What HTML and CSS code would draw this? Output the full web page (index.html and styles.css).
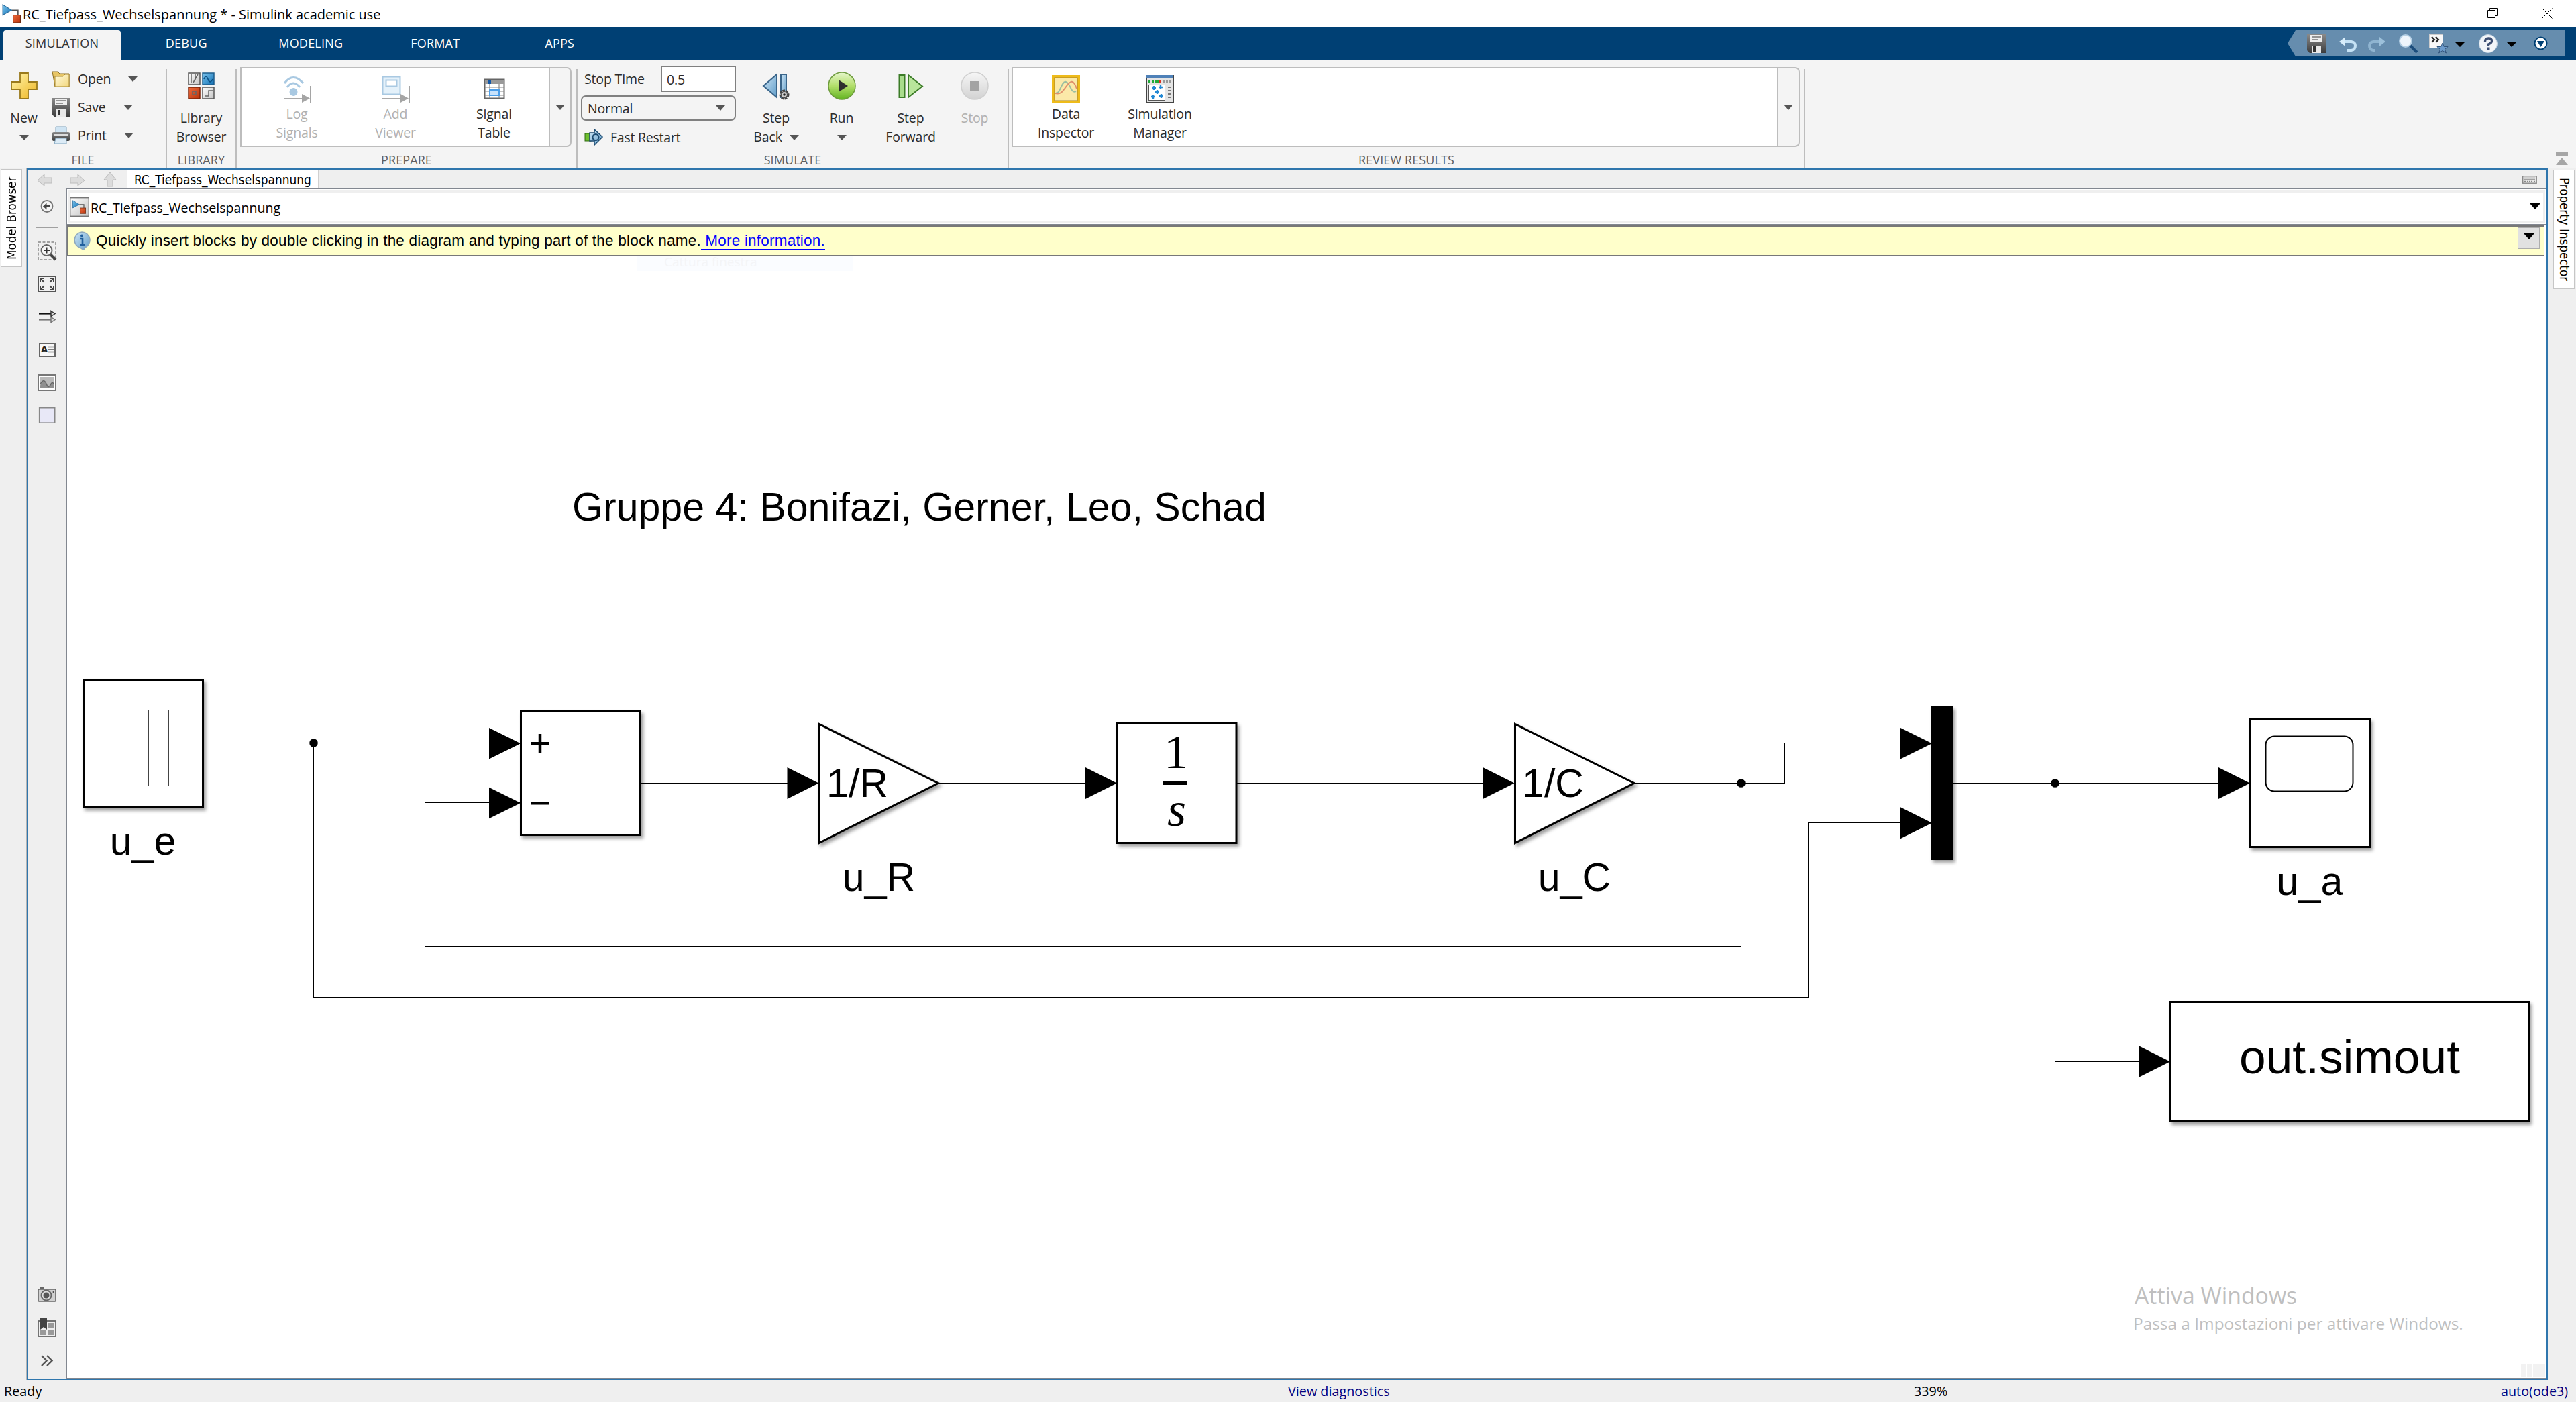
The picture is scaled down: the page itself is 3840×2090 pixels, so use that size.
FILE: index.html
```html
<!DOCTYPE html>
<html lang="en">
<head>
<meta charset="utf-8">
<title>RC_Tiefpass_Wechselspannung * - Simulink academic use</title>
<link rel="stylesheet" href="styles.css">
</head>
<body>
<svg width="0" height="0" class="defs">
  <defs>
    <linearGradient id="gGold" x1="0" y1="0" x2="1" y2="1"><stop offset="0" stop-color="#fff6b0"/><stop offset="1" stop-color="#eeb41e"/></linearGradient>
    <linearGradient id="gFolder" x1="0" y1="0" x2="1" y2="1"><stop offset="0" stop-color="#fffbe0"/><stop offset="1" stop-color="#f3d77c"/></linearGradient>
    <linearGradient id="gBlue" x1="0" y1="0" x2="1" y2="1"><stop offset="0" stop-color="#7cc4ec"/><stop offset="1" stop-color="#1271b5"/></linearGradient>
    <linearGradient id="gRed" x1="0" y1="0" x2="1" y2="1"><stop offset="0" stop-color="#ee6a3c"/><stop offset="1" stop-color="#b8340c"/></linearGradient>
    <linearGradient id="gGray" x1="0" y1="0" x2="1" y2="1"><stop offset="0" stop-color="#ffffff"/><stop offset="1" stop-color="#c4c4c4"/></linearGradient>
    <linearGradient id="gDark" x1="0" y1="0" x2="0" y2="1"><stop offset="0" stop-color="#8a8a8a"/><stop offset="1" stop-color="#3c3c3c"/></linearGradient>
    <linearGradient id="gSky" x1="0" y1="0" x2="1" y2="1"><stop offset="0" stop-color="#cfe6f6"/><stop offset="1" stop-color="#5f9cc8"/></linearGradient>
    <linearGradient id="gGreen" x1="0" y1="0" x2="0" y2="1"><stop offset="0" stop-color="#e6f6cc"/><stop offset=".5" stop-color="#b2de6a"/><stop offset="1" stop-color="#62b421"/></linearGradient>
    <linearGradient id="gLight" x1="0" y1="0" x2="0" y2="1"><stop offset="0" stop-color="#f6f6f6"/><stop offset="1" stop-color="#d2d2d2"/></linearGradient>
    <symbol id="simulink" viewBox="0 0 28 28">
      <path d="M15 9h9v8" fill="none" stroke="#555" stroke-width="1.6"/>
      <path d="M2 1l13 8L2 16z" fill="url(#gBlue)" stroke="#2b6c9c"/>
      <rect x="17" y="16" width="10.5" height="11" fill="url(#gRed)" stroke="#6d2a10"/>
    </symbol>
    <symbol id="floppy" viewBox="0 0 28 28">
      <path d="M0 0h28v28H4l-4-4z" fill="url(#gDark)"/>
      <rect x="5" y="1" width="18" height="10" fill="#eee"/><path d="M7 4h14M7 8h10" stroke="#777" stroke-width="1.5"/>
      <path d="M7 17h14v11H7z" fill="#e8e8e8"/><path d="M9 18h4v8H9z" fill="#333"/>
    </symbol>
  </defs>
</svg>
<div class="window">
  <header class="titlebar">
    <svg class="app-icon" width="29" height="29"><use href="#simulink" width="29" height="29"/></svg>
    <span class="title">RC_Tiefpass_Wechselspannung * - Simulink academic use</span>
    <svg class="caption-buttons" width="178" height="16" viewBox="0 0 178 16" fill="none" stroke="#000">
      <path d="M0 7.5h15M81.500 3.500h11v11h-11zM84.500 3.500v-3h11v11h-3M162.500.5l15 15M177.500.5l-15 15"/>
    </svg>
  </header>

  <nav class="tabs">
    <span class="tab active">SIMULATION</span><span class="tab">DEBUG</span><span class="tab">MODELING</span><span class="tab">FORMAT</span><span class="tab">APPS</span>
    <svg class="quick-access" width="413" height="39" viewBox="3410 45 413 39">
      <path d="M3422 45h401v39h-401l-12-19.500z" fill="#668dae"/>
      <use href="#floppy" x="3439" y="51" width="28" height="28"/>
      <path d="M3494 62h11q6 1 6 6 0 6-6 7h-7" fill="none" stroke="#c5e2f5" stroke-width="4"/><path d="M3487 62l9-7v14z" fill="#d8edfa"/>
      <path d="M3549 62h-11q-6 1-6 6 0 6 6 7h3" fill="none" stroke="#8fb4d0" stroke-width="4"/><path d="M3556 62l-9-7v14z" fill="#9cc0da"/>
      <path d="M3592 67l11 11" stroke="#1c4d7c" stroke-width="4"/><circle cx="3586" cy="61" r="9" fill="#eef5fb" stroke="#b4cfe4" stroke-width="2"/>
      <rect x="3621.500" y="51.500" width="20" height="20" fill="#f8f8f8" stroke="#ccc"/><path d="M3625 55l4 4-4 4M3631 55l4 4-4 4" fill="none" stroke="#222" stroke-width="2.200"/>
      <path d="M3641 64l2.200 5.500h6l-4.700 4 2 5.500-5.500-3.500-5.500 3.500 2-5.500-4.700-4h6z" fill="#6d9ccc" stroke="#33557c"/>
      <path d="M3660 63h14l-7 7zM3737 63h14l-7 7z" fill="#000"/>
      <circle cx="3709" cy="65" r="13.500" fill="#f2f5f8" stroke="#c3d3e2"/><path d="M3704.500 62q0-5 5-5t5 4q0 3-5 5v3" fill="none" stroke="#3d4f73" stroke-width="3.400"/><rect x="3707.500" y="70.500" width="4" height="3.500" fill="#3d4f73"/>
      <circle cx="3787.500" cy="64.500" r="9" fill="#fff" stroke="#004074" stroke-width="2"/><path d="M3782 61h11l-5.500 9z" fill="#004074"/>
    </svg>
  </nav>

  <section class="ribbon">
    <div class="group g-file">
      <div class="group-body">
        <div class="big new">
          <svg width="42" height="42" viewBox="0 0 42 42"><path d="M15 2h12v13h13v11H27v14H15V26H2V15h13z" fill="url(#gGold)" stroke="#9a7a1c" stroke-width="1.800"/></svg>
          <span class="lbl">New</span><i class="arrow"></i>
        </div>
        <div class="rows">
          <div class="row"><svg width="28" height="24" viewBox="0 0 28 24"><path d="M1 1h8l3 3h14v19H5z" fill="#e7c565" stroke="#8c6f22"/><path d="M5 8h12l3-3h6v18H5z" fill="url(#gFolder)" stroke="#a9882f"/></svg><span>Open</span><i class="arrow"></i></div>
          <div class="row"><svg width="28" height="28"><use href="#floppy" width="28" height="28"/></svg><span>Save</span><i class="arrow"></i></div>
          <div class="row"><svg width="28" height="28" viewBox="0 0 28 28"><path d="M6 1h16v10H6z" fill="#cfe4f3" stroke="#7fa3bd"/><rect x="1" y="9" width="26" height="13" rx="2" fill="url(#gDark)"/><path d="M3 13h22" stroke="#ddd" stroke-width="2"/><path d="M6 18h16v8H4z" fill="#dcebf6" stroke="#7fa3bd"/></svg><span>Print</span><i class="arrow"></i></div>
        </div>
      </div>
      <div class="group-name">FILE</div>
    </div>
    <div class="sep"></div>
    <div class="group g-library">
      <div class="group-body">
        <div class="big wide">
          <svg width="42" height="42" viewBox="0 0 42 42"><g stroke="#555" stroke-width="1.500"><rect x="2" y="2" width="17" height="17" fill="url(#gGray)"/><rect x="23" y="2" width="17" height="17" fill="url(#gBlue)" stroke="#1d5d8c"/><rect x="2" y="23" width="17" height="17" fill="url(#gRed)" stroke="#7c2408"/><rect x="23" y="23" width="17" height="17" fill="url(#gGray)"/></g><path d="M6 3v14M9 16l7-12M12 3v9M26 36h6v-8h6M8 29h5v5H8z" fill="none" stroke="#666" stroke-width="1.500"/><path d="M25 11q3-8 6 0t7 0" fill="none" stroke="#0a4f82" stroke-width="1.600"/></svg>
          <span class="lbl">Library<br>Browser</span>
        </div>
      </div>
      <div class="group-name">LIBRARY</div>
    </div>
    <div class="sep"></div>
    <div class="group g-prepare">
      <div class="group-body">
        <div class="gallery">
          <div class="gallery-items">
            <div class="big off"><svg width="42" height="42" viewBox="0 0 42 42"><g fill="none" stroke="#a9c9e2" stroke-width="3"><path d="M2 12q13-17 28 0M6 18q9-12 19 0"/></g><circle cx="15.500" cy="25" r="6" fill="#a9c9e2"/><path d="M1 35h28" stroke="#aaa" stroke-width="2"/><path d="M28 28l12 6.500L28 41z" fill="#a5a5a5"/><path d="M41 16v25" stroke="#a5a5a5" stroke-width="2"/></svg><span class="lbl">Log<br>Signals</span></div>
            <div class="big off"><svg width="42" height="42" viewBox="0 0 42 42"><rect x="1.500" y="2.500" width="26" height="26" fill="#e4f1fa" stroke="#a9c9e2" stroke-width="2"/><rect x="6.500" y="7.500" width="16" height="9" fill="#fff" stroke="#a9c9e2" stroke-width="2"/><path d="M1 35h28" stroke="#aaa" stroke-width="2"/><path d="M28 28l12 6.500L28 41z" fill="#a5a5a5"/><path d="M41 16v25" stroke="#a5a5a5" stroke-width="2"/></svg><span class="lbl">Add<br>Viewer</span></div>
            <div class="big"><svg width="42" height="42" viewBox="0 0 42 42"><rect x="6.500" y="6.500" width="29" height="28" fill="#fff" stroke="#666" stroke-width="2"/><path d="M7 7h28v6H7z" fill="#999"/><rect x="11" y="8" width="5" height="5" fill="#1258a8"/><path d="M7 18h28M7 24h28M7 30h28M14 13v21M28 13v21" stroke="#888" stroke-width="1.200"/><rect x="14" y="22" width="14" height="8" fill="#c8e2fb" stroke="#4c9ee8" stroke-width="2"/></svg><span class="lbl">Signal<br>Table</span></div>
          </div>
          <div class="gallery-more"><i class="arrow"></i></div>
        </div>
      </div>
      <div class="group-name">PREPARE</div>
    </div>
    <div class="sep"></div>
    <div class="group g-simulate">
      <div class="group-body">
        <div class="sim-form">
          <div class="stop-time"><span>Stop Time</span><span class="field">0.5</span></div>
          <div class="combo"><span>Normal</span><i class="arrow"></i></div>
          <div class="fast"><svg width="29" height="24" viewBox="0 0 29 24"><rect x="1" y="6" width="9" height="11" fill="#6fbf2f" stroke="#2f6a10"/><path d="M8 5h7V0l12 11-12 12v-6H8z" fill="url(#gSky)" stroke="#1c4a70" stroke-width="1.500"/><circle cx="17" cy="11.500" r="4.500" fill="none" stroke="#1c4a70" stroke-width="2"/></svg><span>Fast Restart</span></div>
        </div>
        <div class="big w98"><svg width="42" height="42" viewBox="0 0 42 42"><path d="M22 4v34L2 21z" fill="url(#gSky)" stroke="#3a658a" stroke-width="2"/><rect x="28" y="4" width="8" height="34" fill="url(#gSky)" stroke="#3a658a" stroke-width="2"/><circle cx="33" cy="34" r="6" fill="#bbb" stroke="#444" stroke-width="3" stroke-dasharray="3.500 1.500"/><circle cx="33" cy="34" r="4.500" fill="#ccc" stroke="#444"/><circle cx="33" cy="34" r="1.800" fill="#222"/></svg><span class="lbl">Step<br>Back <i class="arrow inline"></i></span></div>
        <div class="big w97"><svg width="42" height="42" viewBox="0 0 42 42"><circle cx="21" cy="21" r="20" fill="url(#gGreen)" stroke="#6c9a3c" stroke-width="1.500"/><path d="M16 12l14 9-14 9z" fill="#2e2e2e"/></svg><span class="lbl">Run</span><i class="arrow"></i></div>
        <div class="big w108"><svg width="42" height="42" viewBox="0 0 42 42"><rect x="3.500" y="5" width="8" height="33" fill="#a9dc8c" stroke="#3c7c28" stroke-width="2"/><path d="M17 5v33l21-16.500z" fill="#b9e59b" stroke="#3c7c28" stroke-width="2"/></svg><span class="lbl">Step<br>Forward</span></div>
        <div class="big w82 off"><svg width="42" height="42" viewBox="0 0 42 42"><circle cx="21" cy="21" r="20" fill="url(#gLight)" stroke="#cfcfcf" stroke-width="1.500"/><rect x="14" y="14" width="14" height="14" fill="#a3a3a3"/></svg><span class="lbl">Stop</span></div>
      </div>
      <div class="group-name">SIMULATE</div>
    </div>
    <div class="sep"></div>
    <div class="group g-review">
      <div class="group-body">
        <div class="gallery">
          <div class="gallery-items">
            <div class="big"><svg width="42" height="42" viewBox="0 0 42 42"><rect x="2" y="2" width="38" height="38" fill="#fbe9a8" stroke="#eebb1a" stroke-width="4"/><rect x="4" y="4" width="34" height="34" fill="none" stroke="#a8842a"/><path d="M6 26C12 30 14 8 21 10S28 28 36 24" fill="none" stroke="#9cbfa0" stroke-width="2"/><path d="M5 27C14 29 16 24 22 16S32 6 37 20" fill="none" stroke="#e0906c" stroke-width="2"/></svg><span class="lbl">Data<br>Inspector</span></div>
            <div class="big"><svg width="42" height="42" viewBox="0 0 42 42"><rect x="1" y="1" width="40" height="40" fill="#e4e4e4" stroke="#444" stroke-width="2"/><path d="M1 0h40v5H1z" fill="#4f81b8"/><path d="M4 9h11" stroke="#1faa38" stroke-width="4" stroke-dasharray="3 2"/><path d="M15 9h4" stroke="#1faa38" stroke-width="4"/><path d="M20 9h3" stroke="#e03020" stroke-width="4"/><path d="M25 9h14" stroke="#999" stroke-width="4" stroke-dasharray="3 2"/><rect x="4.500" y="14.500" width="24" height="23" fill="#fff" stroke="#555"/><path d="M9 19h6M12 16v6M19 18h6M22 15v6M14 25h6M17 22v6M8 32h6M11 29v6M20 31h6M23 28v6" stroke="#2389d4" stroke-width="2.400"/><path d="M33 18h5M33 23h5M33 28h5M33 33h5" stroke="#777" stroke-width="2"/></svg><span class="lbl">Simulation<br>Manager</span></div>
          </div>
          <div class="gallery-more"><i class="arrow"></i></div>
        </div>
      </div>
      <div class="group-name">REVIEW RESULTS</div>
    </div>
    <div class="sep"></div>
    <svg class="collapse" width="18" height="19" viewBox="0 0 18 19"><path d="M0 0h18v5H0zM9 8l9 11H0z" fill="#a6a6a6"/></svg>
  </section>

  <main class="workspace">
    <aside class="rail left"><div class="rail-tab"><span>Model Browser</span></div></aside>
    <div class="editor">
      <div class="doc-tabs">
        <svg width="126" height="27" viewBox="53 253 126 27" fill="#dcdcdc" stroke="#bcbcbc"><path d="M56 269l10-9v5h11v8H66v4zM126 269l-10-9v5h-11v8h11v4zM164 257l9 11h-5v10h-8v-10h-5z"/></svg>
        <span class="doc-tab">RC_Tiefpass_Wechselspannung</span>
        <svg class="keyboard" width="22" height="12" viewBox="0 0 22 12"><rect x=".7" y=".7" width="20.500" height="10.500" fill="#e8e8e8" stroke="#888" stroke-width="1.400"/><path d="M3 3.500h16M3 6h16M3 8.500h2M7 8.500h8M17 8.500h2" stroke="#888" stroke-width="1.300" stroke-dasharray="2 1"/></svg>
      </div>
      <div class="editor-body">
        <svg class="palette" width="57" height="1774" viewBox="42 281 57 1774">
          <circle cx="70" cy="307.500" r="8.500" fill="#f4f4f4" stroke="#777" stroke-width="1.800"/><path d="M64 307.500l5.500-5v3.500h5v3h-5v3.500z" fill="#444"/>
          <path d="M53 339.500h34" stroke="#a0a0a0"/>
          <rect x="57" y="361" width="26" height="26" fill="none" stroke="#888" stroke-width="1.500" stroke-dasharray="4 2.500"/><path d="M75 379l8 8" stroke="#444" stroke-width="4"/><circle cx="69.500" cy="373" r="8" fill="#f6f6f6" stroke="#666" stroke-width="2"/><path d="M65 373h9M69.500 368.500v9" stroke="#333" stroke-width="2"/>
          <rect x="57" y="412" width="26" height="23" fill="#f0f0f0" stroke="#555" stroke-width="2"/><path d="M60 421v-6h6M60.500 415.500l5 5M80 421v-6h-6M79.500 415.500l-5 5M60 426v6h6M60.500 431.500l5-5M80 426v6h-6M79.500 431.500l-5-5" fill="none" stroke="#444" stroke-width="2"/>
          <path d="M58 467.500h20" stroke="#111" stroke-width="2.200"/><path d="M58 476.500h20" stroke="#777" stroke-width="2.200"/><path d="M76 463.500l6 4-6 4z" fill="#ddd" stroke="#333" stroke-width="1.500"/><path d="M76 472.500l6 4-6 4z" fill="#ddd" stroke="#777" stroke-width="1.500"/>
          <rect x="59" y="512" width="23" height="19" fill="#f8f8f8" stroke="#666" stroke-width="2"/><text x="61" y="525" class="glyph-a">A</text><path d="M72 517.500h8M72 521h8M72 524.500h8" stroke="#555" stroke-width="1.500"/>
          <rect x="57" y="559" width="26" height="23" fill="#fff" stroke="#777" stroke-width="2"/><rect x="60" y="562" width="20" height="17" fill="#b9b9b9"/><path d="M60 575q5-11 9-2 3 7 6 1t5-2v7H60z" fill="#8f8f8f"/><path d="M60 573q5-10 9-1 3 8 6 2t5-2" fill="none" stroke="#666" stroke-width="1.500"/>
          <rect x="58.700" y="607.700" width="23" height="22.500" fill="#e8e8f7" stroke="#888" stroke-width="1.600"/>
          <rect x="60" y="1919" width="6" height="4" fill="#666"/><rect x="57" y="1922" width="26" height="18" rx="1" fill="#d0d0d0" stroke="#666" stroke-width="1.600"/><circle cx="69" cy="1931" r="7.500" fill="#ddd" stroke="#666" stroke-width="2"/><circle cx="69" cy="1931" r="4.500" fill="#555"/><circle cx="79.500" cy="1926" r="1" fill="#444"/>
          <rect x="57" y="1969" width="26" height="23" fill="#eee" stroke="#666" stroke-width="1.800"/><path d="M72 1972h9v7h-9zM60 1983h9v7h-9zM72 1983h9v7h-9z" fill="#999"/><path d="M60 1965h10v17l-5-4-5 4z" fill="#444"/>
          <path d="M62 2021l7.500 7.500-7.500 7.500M70 2021l7.500 7.500-7.500 7.500" fill="none" stroke="#555" stroke-width="2.400"/>
        </svg>
        <div class="content">
          <div class="breadcrumb"><div class="crumb-inner">
            <svg width="29" height="29" viewBox="0 0 29 29"><rect x=".7" y=".7" width="27.600" height="27.600" fill="url(#gGray)" stroke="#777" stroke-width="1.400"/><use href="#simulink" x="3" y="4" width="21" height="21"/></svg>
            <span>RC_Tiefpass_Wechselspannung</span>
            <i class="arrow black"></i>
          </div></div>
          <div class="notice">
            <svg width="28" height="28" viewBox="0 0 28 28"><path d="M14 1a12 12 0 0 1 4 23.300L17 28l-5-3.500A12 12 0 0 1 14 1z" fill="url(#gSky)" stroke="#8fa9bd" stroke-width="1.500"/><path d="M11 11h4v9M11 20h7" fill="none" stroke="#205f9c" stroke-width="2.600"/><circle cx="14" cy="6.500" r="2" fill="#205f9c"/></svg>
            <span>Quickly insert blocks by double clicking in the diagram and typing part of the block name.<a class="link">&nbsp;More information.</a></span>
            <div class="notice-btn"><i class="arrow black"></i></div>
          </div>
          <svg class="canvas" width="3695" height="1673" viewBox="100 381 3695 1673">
            <defs><filter id="sh" x="-10%" y="-10%" width="125%" height="125%"><feDropShadow dx="3" dy="4" stdDeviation="2.500" flood-color="#000" flood-opacity=".38"/></filter></defs>
            <rect x="950" y="381" width="321" height="23" fill="#fafcff"/><text class="ghost" x="990" y="397">Cattura finestra</text>
            <text class="ann" x="853" y="776">Gruppe 4: Bonifazi, Gerner, Leo, Schad</text>
            <g fill="none" stroke="#000" stroke-width="1" shape-rendering="crispEdges">
              <path d="M304 1107.500H729M467.500 1107.500V1487.500H2695.500V1226.500H2834M776 1196.500H633.500V1410.500H2595.500V1167.500M956 1167.500H1174M1400 1167.500H1619M1844 1167.500H2212M2438 1167.500H2660.500V1107.500H2834M2911 1167.500H3308M3063.500 1167.500V1582.500H3189"/>
            </g>
            <g fill="#000">
              <circle cx="467.500" cy="1107.500" r="6.300"/><circle cx="2595.500" cy="1167.500" r="6.300"/><circle cx="3063.500" cy="1167.500" r="6.300"/>
              <path d="M729 1085l47 23.300-47 23.300zM729 1173.700l47 23.300-47 23.300zM1173.500 1144l47 23.500-47 23.500zM1618 1144l47 23.500-47 23.500zM2210.500 1144l47 23.500-47 23.500zM2833 1085l47 23.300-47 23.300zM2833 1203.200l47 23.500-47 23.500zM3307 1144l47 23.500-47 23.500zM3188 1559l47 23.500-47 23.500z"/>
            </g>
            <g fill="#fff" stroke="#000" stroke-width="3">
              <rect x="124.500" y="1013.500" width="178" height="189.500" filter="url(#sh)"/>
              <rect x="776.500" y="1060.500" width="178" height="184" filter="url(#sh)"/>
              <path d="M1221 1079.500v177l177.500-89z" filter="url(#sh)"/>
              <rect x="1665.500" y="1078.500" width="177.500" height="178" filter="url(#sh)"/>
              <path d="M2258.500 1079.500v177l177.500-89z" filter="url(#sh)"/>
              <rect x="3354.500" y="1072.500" width="178" height="190" filter="url(#sh)"/>
              <rect x="3235.500" y="1493.500" width="534" height="178" filter="url(#sh)"/>
              <rect x="3377.500" y="1097.500" width="130" height="82" rx="13" stroke-width="2"/>
            </g>
            <rect x="2878.500" y="1053" width="33" height="229" filter="url(#sh)"/>
            <path d="M139 1171h17.500v-112.500h29.500v112.500h35.500v-112.500h30v112.500h23.500" fill="none" stroke="#444" stroke-width="1" shape-rendering="crispEdges"/>
            <path d="M791 1108.200h28M805 1094v28M791 1197.200h28" stroke="#000" stroke-width="4.500"/>
            <path d="M1733.500 1167.500h36" stroke="#000" stroke-width="5"/>
            <g class="lab">
              <text x="213" y="1274">u_e</text><text x="1310" y="1328">u_R</text><text x="2347" y="1328">u_C</text><text x="3443" y="1333.500">u_a</text>
              <text x="1278" y="1188">1/R</text><text x="2315" y="1188">1/C</text>
              <text class="big-text" x="3502.500" y="1600">out.simout</text>
              <text class="math" x="1753" y="1145">1</text><text class="math it" x="1754" y="1231">s</text>
            </g>
            <text class="wm1" x="3182" y="1944">Attiva Windows</text>
            <text class="wm2" x="3180" y="1982">Passa a Impostazioni per attivare Windows.</text>
            <path d="M3758 2034h7v19h-7zM3767 2034h7v19h-7zM3776 2034h18v19h-18z" fill="#f2f2f2"/>
          </svg>
        </div>
      </div>
    </div>
    <aside class="rail right"><div class="rail-tab"><span>Property Inspector</span></div></aside>
  </main>

  <footer class="status"><span>Ready</span><span class="blue">View diagnostics</span><span>339%</span><span class="blue">auto(ode3)</span></footer>
</div>
</body>
</html>
```
FILE: styles.css
```css
* { box-sizing: border-box; }
body { margin: 0; background: #efefef; color: #000; font-family: "Open Sans", "Noto Sans", sans-serif; font-size: 20px; }
svg { display: block; flex: none; }
.defs { position: absolute; }
.window { display: flex; flex-direction: column; width: 3840px; height: 2090px; overflow: hidden; }

.titlebar { display: flex; height: 40px; background: #fff; padding-right: 35px; }
.app-icon { margin: 6px 0 0 2px; }
.title { margin-left: 3px; line-height: 43px; white-space: pre; }
.caption-buttons { margin: 12px 0 0 auto; }

.tabs { display: flex; height: 49px; background: #004074; padding: 5px 17px 0 5px; }
.tab { width: 185.500px; text-align: center; color: #fff; font-size: 18px; letter-spacing: .2px; line-height: 39px; }
.tab:nth-child(2) { margin-left: 5px; }
.tab.active { width: 175px; height: 44px; background: #f4f4f4; color: #333; border-radius: 4px 4px 0 0; }
.quick-access { margin-left: auto; }

.ribbon { display: flex; height: 162px; background: #f4f4f4; border-bottom: 1px solid #808080; color: #2b2b2b; font-size: 19.500px; letter-spacing: -.15px; }
.group { display: flex; flex-direction: column; }
.group-body { display: flex; height: 138px; }
.group-name { font-size: 18px; letter-spacing: .1px; line-height: 23px; text-align: center; color: #5f5f5f; }
.sep { width: 2px; margin-top: 14px; background: #bdbdbd; }
.g-file { width: 247px; }
.g-library { width: 102px; }
.g-prepare { width: 506px; }
.g-simulate { width: 641px; }
.g-review { width: 1185px; }
.collapse { margin: 138px 12px 0 auto; }

.arrow { display: block; flex: none; width: 0; height: 0; border: 7px solid transparent; border-top: 8px solid #555; border-bottom: 0; }
.arrow.inline { display: inline-block; vertical-align: 2px; margin-left: 6px; }
.arrow.black { border-width: 9px 8px 0; border-top-color: #000; }

.big { display: flex; flex-direction: column; align-items: center; padding-top: 18px; }
.big .lbl { margin-top: 13px; line-height: 28px; text-align: center; white-space: nowrap; }
.big .lbl + .arrow { margin-top: 11px; }
.big.new { width: 71px; }
.big.wide { width: 100%; }
.big.off { color: #b0b0b0; }
.w98 { width: 98px; }
.w97 { width: 97px; }
.w108 { width: 109px; }
.w82 { width: 82px; }

.rows { padding: 8px 0 0 6px; }
.row { display: flex; align-items: center; height: 42px; line-height: 28px; }
.row span { margin: 0 26px 0 11px; }

.gallery { display: flex; height: 119px; margin-top: 11px; border: 2px solid #bdbdbd; border-radius: 0 7px 7px 0; }
.g-prepare .gallery { width: 494px; margin-left: 5px; }
.g-review .gallery { width: 1175px; margin-left: 4px; }
.gallery-items { display: flex; flex: 1; background: #fff; padding-left: 9px; border-right: 2px solid #bdbdbd; }
.gallery-more { display: flex; width: 30px; align-items: center; justify-content: center; border-radius: 0 5px 5px 0; }
.gallery .big { width: 147px; padding-top: 10px; }
.g-review .gallery .big { width: 140px; }
.gallery .big .lbl { margin-top: 2px; }

.sim-form { width: 231px; margin-left: 5px; margin-right: 11px; padding-top: 9px; }
.stop-time { display: flex; justify-content: space-between; height: 39px; padding-left: 5px; line-height: 39px; }
.field { width: 112px; background: #fff; border: 2px solid #808080; padding-left: 7px; line-height: 37px; }
.combo { display: flex; justify-content: space-between; align-items: center; height: 38px; margin-top: 5px; padding: 0 14px 0 8px; border: 2px solid #808080; border-radius: 7px; background: #f4f4f4; }
.fast { display: flex; align-items: center; gap: 10px; margin-top: 11px; padding-left: 5px; line-height: 28px; letter-spacing: -.25px; }

.workspace { display: flex; height: 1806px; }
.rail { display: flex; align-items: flex-start; }
.rail.left { width: 40px; padding: 1px 0 0 1px; border-right: 1px solid #b5b5b5; }
.rail.right { width: 42px; padding: 2px 0 0 7px; border-left: 1px solid #b5b5b5; }
.rail-tab { display: flex; align-items: center; justify-content: center; width: 32px; background: #fff; border: 1px solid #c6c6c6; writing-mode: vertical-rl; font-family: "DejaVu Sans Condensed", "DejaVu Sans", sans-serif; font-size: 18.600px; white-space: nowrap; }
.left .rail-tab { height: 146px; transform: rotate(180deg); }
.right .rail-tab { height: 178px; }

.editor { display: flex; flex-direction: column; width: 3758px; border: 2px solid #2f76ad; }
.doc-tabs { display: flex; height: 28px; padding: 0 14px 0 11px; border-bottom: 1px solid #9c9c9c; background: #efefef; }
.doc-tab { width: 286px; height: 27px; margin-left: 10px; padding-left: 10px; background: #fff; border-left: 1px solid #d0d0d0; border-right: 1px solid #d0d0d0; font-family: "DejaVu Sans Condensed", "DejaVu Sans", sans-serif; font-size: 18.900px; line-height: 30px; white-space: nowrap; }
.keyboard { margin: 9px 0 0 auto; }
.editor-body { display: flex; height: 1774px; }
.glyph-a { font: bold 13px "DejaVu Sans", sans-serif; fill: #222; }
.content { display: flex; flex-direction: column; flex: 1; background: #fff; border: solid #828790; border-width: 0 1px 1px; }
.breadcrumb { height: 54px; border: solid #828790; border-width: 1px 0; padding: 1px; }
.crumb-inner { display: flex; align-items: center; height: 50px; padding: 0 4px 0 0; border: solid #efefef; border-width: 4px 3px; font-size: 19.600px; line-height: 28px; }
.crumb-inner svg { margin-right: 2px; }
.crumb-inner span { padding-top: 3px; }
.crumb-inner .arrow { margin: -1px 0 0 auto; }
.notice { display: flex; width: 3693px; height: 45px; margin-top: 1px; padding-left: 7px; background: #ffffcb; border: 1px solid #787878; border-top-width: 2px; font-family: "Liberation Sans", Arial, sans-serif; font-size: 22.500px; letter-spacing: .21px; line-height: 41px; white-space: nowrap; }
.notice > svg { margin: 7px 7px 0 0; }
.link { color: #0000ff; border-bottom: 1px solid #0000ff; }
.notice-btn { display: flex; justify-content: center; width: 33px; height: 32px; margin: 1px 6px 0 auto; padding-top: 8px; background: #e1e1e1; border: 1px solid #adadad; }
.canvas { overflow: visible; }
.canvas text { white-space: pre; }
.ghost { font-size: 19px; fill: #f4f5f7; }
.ann, .lab { font-family: "Liberation Sans", Arial, sans-serif; font-size: 59.100px; }
.lab { text-anchor: middle; }
.big-text { font-size: 71.300px; }
.math { font-family: "Liberation Serif", "Times New Roman", serif; font-size: 72px; }
.it { font-style: italic; }
.wm1, .wm2 { fill: #bfbfbf; }
.wm1 { font-size: 33.800px; }
.wm2 { font-size: 24.400px; }

.status { display: grid; grid-template-columns: 1914px 933px 875px 1fr; height: 33px; padding-left: 6px; font-size: 19.800px; line-height: 34px; white-space: nowrap; }
.blue { color: #000080; }
```
